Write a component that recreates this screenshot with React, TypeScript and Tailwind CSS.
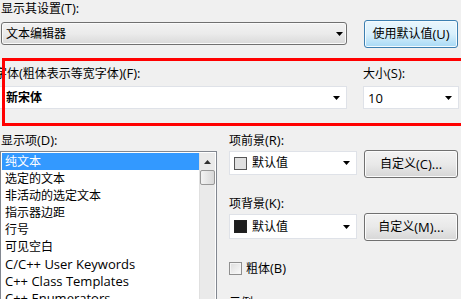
import React from "react";

const font = { fontFamily: '"Open Sans", "Noto Sans CJK SC", sans-serif' };

function T({ s }: { s: string }) {
  const parts = s.split(/([\u4e00-\u9fff]+)/).filter((p) => p.length > 0);
  return (
    <>
      {parts.map((p, i) =>
        /[\u4e00-\u9fff]/.test(p) ? (
          <span key={i}>{p}</span>
        ) : (
          <span key={i} className="text-[13px]">
            {p}
          </span>
        )
      )}
    </>
  );
}

function Arrow() {
  return (
    <svg width="7" height="4" viewBox="0 0 7 4" className="shrink-0">
      <path d="M0 0 H7 L3.5 4 Z" fill="#000" />
    </svg>
  );
}

function WhiteCombo({ className, children }: { className: string; children: React.ReactNode }) {
  return (
    <div className={"flex items-center bg-white border border-[#dfe2e8] " + className}>
      <div className="flex-1 flex items-center min-w-0">{children}</div>
      <div className="w-[13px] flex justify-start">
        <Arrow />
      </div>
    </div>
  );
}

function GrayButton({ className, children }: { className: string; children: React.ReactNode }) {
  return (
    <div
      className={
        "flex items-center justify-center rounded-[3px] border border-[#707070] bg-gradient-to-b from-[#f2f2f2] via-[#e9e9e9] to-[#d6d6d6] shadow-[inset_0_0_0_1px_#fbfbfb] text-[12px] text-black " +
        className
      }
    >
      {children}
    </div>
  );
}

const items = [
  "纯文本",
  "选定的文本",
  "非活动的选定文本",
  "指示器边距",
  "行号",
  "可见空白",
  "C/C++ User Keywords",
  "C++ Class Templates",
  "C++ Enumerators",
];

export default function App() {
  return (
    <div
      className="relative w-[461px] h-[299px] overflow-hidden bg-[#f0f0f0] text-[12px] text-black leading-[16px]"
      style={font}
    >
      {/* 显示其设置 */}
      <div className="h-[20px] pl-[1px] pt-[0px]">
        <T s="显示其设置(T):" />
      </div>
      <div className="flex items-start h-[28px]">
        <div className="mt-[2px] ml-[1px] w-[346px] h-[23px] rounded-[3px] border border-[#707070] bg-gradient-to-b from-[#f2f2f2] via-[#ebebeb] to-[#d9d9d9] shadow-[inset_0_0_0_1px_#fafafa] flex items-center pl-[4px] pr-[3px]">
          <span className="flex-1">文本编辑器</span>
          <Arrow />
        </div>
        <div className="ml-[17px] w-[94px] h-[28px] rounded-[3px] border border-[#3c7fb1] bg-gradient-to-b from-[#eaf6fd] via-[#d9f0fc] to-[#a7d9f5] shadow-[inset_0_0_0_1px_#f4fbfe] flex items-center justify-center">
          <T s="使用默认值(U)" />
        </div>
      </div>

      {/* 字体 / 大小 */}
      <div className="flex mt-[17px] h-[67px]">
        <div className="flex flex-col w-[348px] ml-[-1px]">
          <div className="h-[21px] ml-[-4px]">
            <T s="字体(粗体表示等宽字体)(F):" />
          </div>
          <WhiteCombo className="h-[23px] pl-[6px] pr-[0px]">
            <span className="font-bold">新宋体</span>
          </WhiteCombo>
        </div>
        <div className="flex flex-col w-[96px] ml-[16px]">
          <div className="h-[21px]">
            <T s="大小(S):" />
          </div>
          <WhiteCombo className="h-[23px] pl-[4px]">
            <span className="text-[13px]">10</span>
          </WhiteCombo>
        </div>
      </div>

      {/* 显示项 */}
      <div className="flex">
        <div className="flex flex-col w-[217px]">
          <div className="h-[19px] pl-[1px]">
            <T s="显示项(D):" />
          </div>
          <div className="h-[200px] border border-[#828790] bg-white flex p-[1px]">
            <div className="flex-1 flex flex-col">
              {items.map((t, i) => (
                <div
                  key={t}
                  className={
                    "h-[17px] pl-[3px] flex items-center whitespace-nowrap " +
                    (i === 0 ? "bg-[#3399ff] text-white" : "")
                  }
                >
                  <T s={t} />
                </div>
              ))}
            </div>
            <div className="w-[16px] bg-[#eaeaea] border-l border-[#e0e0e0] flex flex-col items-center">
              <div className="h-[17px] flex items-center justify-center">
                <svg width="7" height="4" viewBox="0 0 7 4">
                  <path d="M0 4 H7 L3.5 0 Z" fill="#303030" />
                </svg>
              </div>
              <div className="w-[15px] h-[15px] rounded-[2px] border border-[#979797] bg-gradient-to-r from-[#f3f3f3] to-[#d8d8d8]" />
            </div>
          </div>
        </div>

        <div className="flex flex-col ml-[12px] w-[232px]">
          <div className="h-[18px]">
            <T s="项前景(R):" />
          </div>
          <div className="flex items-start">
            <WhiteCombo className="mt-[1px] w-[128px] h-[24px] pl-[4px]">
              <div className="w-[13px] h-[13px] border border-[#555] bg-[#e0e0e0] mr-[5px]" />
              <span>默认值</span>
            </WhiteCombo>
            <GrayButton className="ml-[7px] w-[94px] h-[28px]">
              <T s="自定义(C)..." />
            </GrayButton>
          </div>
          <div className="h-[35px] pt-[17px]">
            <T s="项背景(K):" />
          </div>
          <div className="flex items-start">
            <WhiteCombo className="mt-[1px] w-[128px] h-[25px] pl-[4px]">
              <div className="w-[13px] h-[13px] border border-[#222] bg-[#1e1e1e] mr-[5px]" />
              <span>默认值</span>
            </WhiteCombo>
            <GrayButton className="ml-[7px] w-[94px] h-[28px]">
              <T s="自定义(M)..." />
            </GrayButton>
          </div>
          <div className="flex items-center mt-[19px] h-[16px]">
            <div className="w-[13px] h-[13px] border border-[#8f8f8f] bg-gradient-to-br from-[#dcdcdc] to-[#fbfbfb] shadow-[inset_0_0_0_1px_#f4f4f4] mr-[4px]" />
            <span>
              <T s="粗体(B)" />
            </span>
          </div>
          <div className="mt-[19px]">示例</div>
        </div>
      </div>

      {/* red annotation rectangle */}
      <div className="absolute left-[2px] top-[58px] w-[462px] h-[68px] border-[3px] border-[#ff0000] pointer-events-none" />
    </div>
  );
}
